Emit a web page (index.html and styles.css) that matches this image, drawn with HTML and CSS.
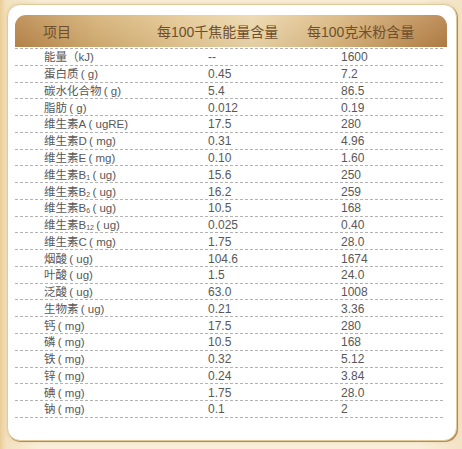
FILE: index.html
```html
<!DOCTYPE html>
<html lang="zh">
<head>
<meta charset="utf-8">
<title>营养成分表</title>
<link rel="stylesheet" href="styles.css">
</head>
<body>
<div class="card">
  <div class="head">
    <span>项目</span>
    <span>每100千焦能量含量</span>
    <span>每100克米粉含量</span>
  </div>
  <div class="body">
    <div class="row"><span>能量（kJ)</span><span>--</span><span>1600</span></div>
    <div class="row"><span>蛋白质&thinsp;( g)</span><span>0.45</span><span>7.2</span></div>
    <div class="row"><span>碳水化合物&thinsp;( g)</span><span>5.4</span><span>86.5</span></div>
    <div class="row"><span>脂肪&thinsp;( g)</span><span>0.012</span><span>0.19</span></div>
    <div class="row"><span>维生素A&thinsp;( ugRE)</span><span>17.5</span><span>280</span></div>
    <div class="row"><span>维生素D&thinsp;( mg)</span><span>0.31</span><span>4.96</span></div>
    <div class="row"><span>维生素E&thinsp;( mg)</span><span>0.10</span><span>1.60</span></div>
    <div class="row"><span>维生素B<sub>1</sub>&thinsp;( ug)</span><span>15.6</span><span>250</span></div>
    <div class="row"><span>维生素B<sub>2</sub>&thinsp;( ug)</span><span>16.2</span><span>259</span></div>
    <div class="row"><span>维生素B<sub>6</sub>&thinsp;( ug)</span><span>10.5</span><span>168</span></div>
    <div class="row"><span>维生素B<sub>12</sub>&thinsp;( ug)</span><span>0.025</span><span>0.40</span></div>
    <div class="row"><span>维生素C&thinsp;( mg)</span><span>1.75</span><span>28.0</span></div>
    <div class="row"><span>烟酸&thinsp;( ug)</span><span>104.6</span><span>1674</span></div>
    <div class="row"><span>叶酸&thinsp;( ug)</span><span>1.5</span><span>24.0</span></div>
    <div class="row"><span>泛酸&thinsp;( ug)</span><span>63.0</span><span>1008</span></div>
    <div class="row"><span>生物素&thinsp;( ug)</span><span>0.21</span><span>3.36</span></div>
    <div class="row"><span>钙&thinsp;( mg)</span><span>17.5</span><span>280</span></div>
    <div class="row"><span>磷&thinsp;( mg)</span><span>10.5</span><span>168</span></div>
    <div class="row"><span>铁&thinsp;( mg)</span><span>0.32</span><span>5.12</span></div>
    <div class="row"><span>锌&thinsp;( mg)</span><span>0.24</span><span>3.84</span></div>
    <div class="row"><span>碘&thinsp;( mg)</span><span>1.75</span><span>28.0</span></div>
    <div class="row"><span>钠&thinsp;( mg)</span><span>0.1</span><span>2</span></div>
  </div>
</div>
</body>
</html>
```

FILE: styles.css
```css
html, body {
  margin: 0;
  padding: 0;
}
body {
  width: 462px;
  height: 449px;
  overflow: hidden;
  background: linear-gradient(90deg, #e9cd97 0, #f3e2bf 6px, #f8eed9 40px, #f8eed9 420px, #f3e3c4 100%);
  font-family: "Liberation Sans", "Noto Sans CJK SC", sans-serif;
  color: #585858;
  padding-top: 4px;
  box-sizing: border-box;
}
.card {
  margin-left: 7px;
  width: 450px;
  height: 437px;
  box-sizing: border-box;
  background: #fff;
  border: 1px solid #e2c99c;
  border-radius: 13px;
  box-shadow: 1px 1px 0 #b58b55, 0 0 4px rgba(200, 160, 90, 0.35);
  padding: 10px 9px 0 7px;
}
.head {
  height: 32px;
  border-radius: 11px 11px 0 0;
  background:
    linear-gradient(180deg, rgba(255, 255, 255, 0.12), rgba(0, 0, 0, 0.04)),
    linear-gradient(90deg, #b9864a 0%, #d3ad70 18%, #e6c994 40%, #ecd6aa 55%, #d9b57c 75%, #b47f45 100%);
  display: grid;
  grid-template-columns: 114px 150px 1fr;
  align-items: center;
  padding-left: 28px;
  font-size: 14px;
  color: #6f4f2d;
  margin-bottom: 1px;
}
.body {
  background: linear-gradient(90deg, #b3b3b3 3px, transparent 3px) top left / 5px 1px repeat-x;
  padding-top: 1px;
  width: 430px;
}
.row {
  height: 16.77px;
  box-sizing: border-box;
  display: grid;
  grid-template-columns: 164px 133px 1fr;
  align-items: center;
  padding-left: 29px;
  font-size: 12px;
  line-height: 14px;
  background: linear-gradient(90deg, #b3b3b3 3px, transparent 3px) bottom left / 5px 1px repeat-x;
}
.row span:first-child {
  font-size: 11.5px;
}
sub {
  font-size: 7px;
  vertical-align: -1px;
  line-height: 0;
}
```
